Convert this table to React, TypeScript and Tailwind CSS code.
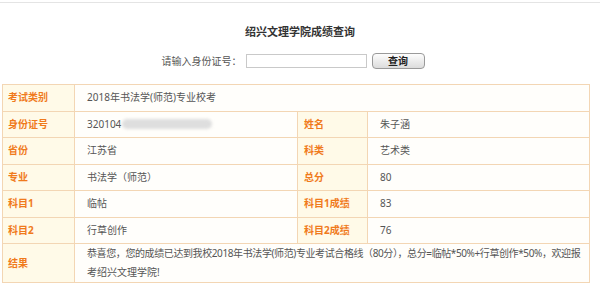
import React from "react";

const font = { fontFamily: '"Noto Sans", "Noto Sans CJK SC", sans-serif' };

function Label({ children, pl = "pl-[5px]" }: { children: React.ReactNode; pl?: string }) {
  return (
    <td className={`${pl} border border-[#f3d6b4] bg-[#fffae8] text-[10px] font-bold text-[#f07a1c] align-middle`}>
      {children}
    </td>
  );
}

function Value({ children, colSpan }: { children: React.ReactNode; colSpan?: number }) {
  return (
    <td colSpan={colSpan} className="pl-[12px] border border-[#f3d6b4] bg-[#fffefb] text-[10px] text-[#555] align-middle">
      {children}
    </td>
  );
}

export default function App() {
  return (
    <div className="w-[600px] h-[299px] bg-white overflow-hidden" style={font}>
      <div className="h-[3px] border-b border-[#e4e4e4]" />
      <h1 className="mt-[22px] text-center text-[11px] font-bold leading-[14px] text-[#333]">
        绍兴文理学院成绩查询
      </h1>
      <div className="mt-[14px] flex items-center justify-center pr-[14px]">
        <span className="text-[10px] text-[#555]">请输入身份证号：</span>
        <input className="ml-[4px] h-[14px] w-[121px] border border-[#c9c9c9] bg-white" />
        <button className="ml-[5px] h-[16px] w-[53px] rounded-[4px] border border-[#9a9a9a] bg-gradient-to-b from-[#fdfdfd] to-[#dcdcdc] text-[10px] font-bold leading-[14px] text-[#222]">
          查询
        </button>
      </div>
      <div className="mt-[15px] pl-[2px] pr-[10px]">
        <table className="w-[588px] border-collapse table-fixed">
          <colgroup>
            <col className="w-[72px]" />
            <col className="w-[223px]" />
            <col className="w-[70px]" />
            <col />
          </colgroup>
          <tbody>
            <tr className="h-[26.5px]">
              <Label>考试类别</Label>
              <Value colSpan={3}>2018年书法学(师范)专业校考</Value>
            </tr>
            <tr className="h-[26.5px]">
              <Label>身份证号</Label>
              <Value>
                <span className="inline-flex items-center">
                  320104
                  <span className="ml-[1px] inline-block h-[10px] w-[90px] rounded-full bg-[#dedede] blur-[1.5px]" />
                </span>
              </Value>
              <Label pl="pl-[6px]">姓名</Label>
              <Value>朱子涵</Value>
            </tr>
            <tr className="h-[26.5px]">
              <Label>省份</Label>
              <Value>江苏省</Value>
              <Label pl="pl-[6px]">科类</Label>
              <Value>艺术类</Value>
            </tr>
            <tr className="h-[26.5px]">
              <Label>专业</Label>
              <Value>书法学（师范）</Value>
              <Label pl="pl-[6px]">总分</Label>
              <Value>80</Value>
            </tr>
            <tr className="h-[26.5px]">
              <Label>科目1</Label>
              <Value>临帖</Value>
              <Label pl="pl-[6px]">科目1成绩</Label>
              <Value>83</Value>
            </tr>
            <tr className="h-[26.5px]">
              <Label>科目2</Label>
              <Value>行草创作</Value>
              <Label pl="pl-[6px]">科目2成绩</Label>
              <Value>76</Value>
            </tr>
            <tr>
              <Label>结果</Label>
              <td colSpan={3} className="pl-[12px] pr-[2px] border border-[#f3d6b4] bg-[#fffefb] text-[10px] leading-[19px] text-[#555] align-middle">
                <span className="block whitespace-nowrap tracking-[-0.4px]">
                  恭喜您，您的成绩已达到我校2018年书法学(师范)专业考试合格线（80分），总分=临帖*50%+行草创作*50%，欢迎报
                </span>
                <span className="block">考绍兴文理学院!</span>
              </td>
            </tr>
          </tbody>
        </table>
      </div>
    </div>
  );
}
